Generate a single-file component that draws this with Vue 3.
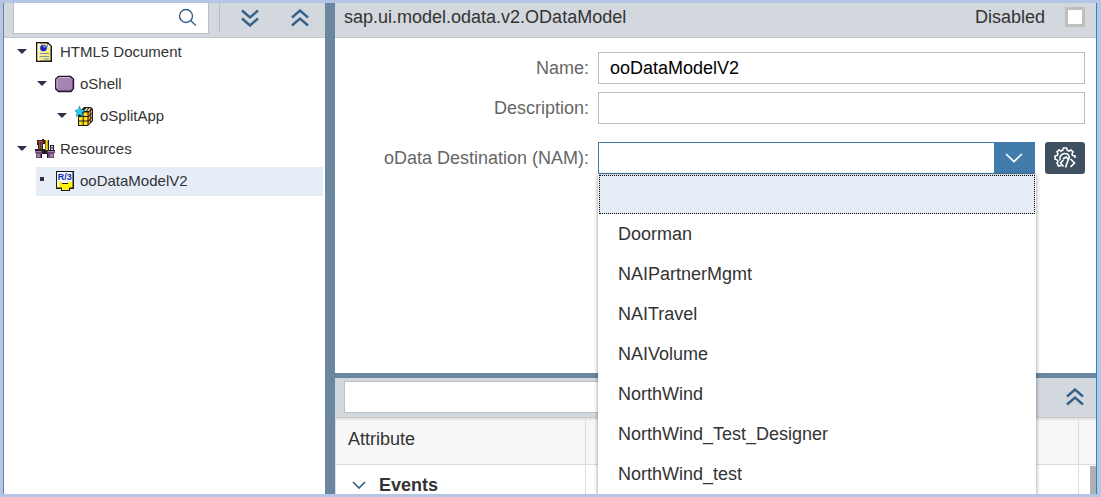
<script setup>
import { ref } from 'vue'

const name = ref('ooDataModelV2')
const description = ref('')
const destination = ref('')
const disabled = ref(false)
const treeFilter = ref('')
const attributeFilter = ref('')
const open = ref(true)

const tree = [
  { label: 'HTML5 Document', level: 0, icon: 'document' },
  { label: 'oShell', level: 1, icon: 'shell' },
  { label: 'oSplitApp', level: 2, icon: 'cube' },
  { label: 'Resources', level: 0, icon: 'resources', group: true },
  { label: 'ooDataModelV2', level: 1, icon: 'model', selected: true, leaf: true },
]

const destinations = [
  '',
  'Doorman',
  'NAIPartnerMgmt',
  'NAITravel',
  'NAIVolume',
  'NorthWind',
  'NorthWind_Test_Designer',
  'NorthWind_test',
]

function choose(value) {
  destination.value = value
  open.value = false
}
</script>

<template>
  <div class="frame">
    <div class="window">
      <aside class="side">
        <div class="side-bar">
          <div class="search">
            <input v-model="treeFilter" type="text" aria-label="Filter tree" />
            <svg class="lens" viewBox="0 0 20 20" aria-hidden="true">
              <circle cx="8" cy="8" r="6.5" />
              <path d="M12.7 12.7 18 17.5" />
            </svg>
          </div>
          <span class="divider"></span>
          <button class="plain" aria-label="Expand all">
            <svg class="double" viewBox="0 0 18 18"><path d="M1 1.5 9 8.5 17 1.5M1 9.5 9 16.5 17 9.5" /></svg>
          </button>
          <button class="plain" aria-label="Collapse all">
            <svg class="double" viewBox="0 0 18 18"><path d="M1 8.5 9 1.5 17 8.5M1 16.5 9 9.5 17 16.5" /></svg>
          </button>
        </div>

        <ul class="tree" role="tree">
          <li
            v-for="node in tree"
            :key="node.label"
            role="treeitem"
            :aria-selected="!!node.selected"
            :class="['node', 'level-' + node.level, { selected: node.selected, group: node.group }]"
          >
            <span :class="node.leaf ? 'bullet' : 'arrow'"></span>
            <svg v-if="node.icon === 'document'" class="icon" viewBox="0 0 20 20">
              <path fill="#1a1a1a" d="M1 0h12l4 4v16H1z" />
              <path fill="#fbe98c" d="M2.500 1.500H12V5h3.500v13.500h-13z" />
              <path fill="#fff6c4" d="M2.500 1.500H5v17H2.500z" />
              <path fill="#fff" d="M12.500 1.500V5H16z" />
              <circle cx="8.500" cy="6" r="3.300" fill="#1524c4" />
              <path fill="#5b92f2" d="M7.500 3.500 10 3l1 2-2 1z" />
              <path stroke="#7795a6" stroke-width="1.200" d="M4.500 11.500h9.500M4.500 14.500h9.500M9 17h5" />
            </svg>
            <svg v-else-if="node.icon === 'shell'" class="icon" viewBox="0 0 20 20">
              <path fill="#a684b4" stroke="#211326" stroke-width="1.300" d="M3.500 2.500h12L18.500 5v9.500L16 17.500H3.500L.7 15V5z" />
              <path fill="none" stroke="#cdb2d6" d="M2 14V5.500l2-2h11" />
              <path fill="none" stroke="#765180" d="M4 16.300h11.500l2-2V6" />
            </svg>
            <svg v-else-if="node.icon === 'cube'" class="icon" viewBox="0 0 20 20">
              <path fill="#1a1a1a" d="m3 7 6-6h7l2 2v12l-5 5H3z" />
              <path fill="#fff4b0" d="m8.500 5 3-3H13l-2 3zM12 5l2.500-3H16l-2 3z" />
              <path fill="#f4a64f" d="m13.500 7 1.500-2v3l-1.500 2zM15.700 5 17 3.500v3L15.700 8zM13.500 11.500l1.500-2v3l-1.500 2zM15.700 9 17 7.500v3l-1.300 1.500zM13.500 16l1.500-2v3l-1.500 1.500zM15.700 13l1.300-1.500v3L15.700 16z" />
              <path fill="#ffe119" d="M8.500 6.500h4V10h-4zM4 11h3.700v3.600H4zM8.700 11h3.800v3.600H8.700zM4 15.500h3.700V19H4zM8.700 15.500h3.800V19H8.700z" />
              <path fill="#28cbea" stroke="#07708a" stroke-width=".5" d="m4.500 0 1.300 3.500L10 4.500 7 6.500l1 4L4.500 8.500 1 10.500l1-4-2.500-2 3.700-.8z" />
            </svg>
            <svg v-else-if="node.icon === 'resources'" class="icon" viewBox="0 0 20 20">
              <path fill="#222" d="M2 1h5V0h2v1h1v4H8v5h2V1h4v10h1V6h4v5h1v2H0v-3h3V6H2z" />
              <path fill="#d33" d="M3 2h5v1.500H3zM4 4h1.500v6H4z" />
              <path fill="#506b76" d="M6 4h1v6H6z" />
              <path fill="#f3d021" d="M10.500 1h2.500v10h-2.500z" />
              <path stroke="#6e5816" stroke-width=".7" d="M12 3h1M12 5h1M12 7h1M12 9h1" />
              <path fill="#d5d5df" d="M16 7h2v1l-1 1 1 1v1h-2v-1l1-1-1-1z" />
              <path fill="#704677" d="M0 12h20v2h-1v5h-6v-4H7v4H1v-5H0z" />
              <path fill="#a47ba9" d="M1 12h5v1H1zM13 12h6v1h-6zM2 15h3v3H2zM15 15h3v3h-3z" />
              <path fill="#221326" d="M7 12h5v3H7zM12 14h1v5h-1zM6 15h1v4H6z" />
            </svg>
            <svg v-else class="icon" viewBox="0 0 20 20">
              <path fill="#1a1a1a" d="M1 0h18v18h-4v2H6v-2H1z" />
              <path fill="#edf4ff" d="M2 1h15.500v10H2z" />
              <path fill="#ffef12" d="M2 11h5v2h6v-2h4.500v5.500H14V19H7v-2.500H2z" />
              <path fill="#fffde0" d="M2 11h2v5H2zM7 11h6v1H7z" />
              <text x="9.700" y="9" text-anchor="middle" class="mark">R/3</text>
            </svg>
            <span>{{ node.label }}</span>
          </li>
        </ul>
      </aside>

      <div class="splitter"></div>

      <main class="main">
        <header class="title-bar">
          <span>sap.ui.model.odata.v2.ODataModel</span>
          <label class="disabled">Disabled<input v-model="disabled" type="checkbox" /></label>
        </header>

        <form class="form" @submit.prevent>
          <label for="name">Name:</label>
          <input id="name" v-model="name" class="field" type="text" />
          <label for="description">Description:</label>
          <input id="description" v-model="description" class="field" type="text" />
          <label class="spaced" for="destination">oData Destination (NAM):</label>
          <div class="destination spaced">
            <div class="combo">
              <input
                id="destination"
                v-model="destination"
                type="text"
                role="combobox"
                aria-controls="destinations"
                :aria-expanded="open"
              />
              <button type="button" class="toggle" aria-label="Show destinations" @click="open = !open">
                <svg viewBox="0 0 18 10"><path d="M1 1 9 8.500 17 1" /></svg>
              </button>
              <ul v-if="open" id="destinations" class="menu" role="listbox">
                <li
                  v-for="item in destinations"
                  :key="item"
                  role="option"
                  :aria-selected="item === destination"
                  :class="{ active: item === destination }"
                  @click="choose(item)"
                >{{ item }}</li>
              </ul>
            </div>
            <button type="button" class="config" aria-label="Configure destination">
              <svg viewBox="0 0 22 22">
                <path d="M7.500 18.500 4.500 19 3 16l1-1.500-.7-1.500L1 12V9l2.300-.7.700-1.500-1-2L5 3l2 1 1.700-.8L9.500 1h3l.8 2.200L15 4l2-1 2 2-1 2 .7 1.500L21 9v2" />
                <path d="M6 13.500C5 9 8 6.500 11 6.500c3.500 0 5 3 4 5.500M9.500 13 6.500 16l3 3.500M9 12l3-2 2 2M11.500 20.500l3.500-10M16.500 12l4 4-4 4" />
              </svg>
            </button>
          </div>
        </form>

        <section class="attributes">
          <div class="attribute-bar">
            <input v-model="attributeFilter" type="text" aria-label="Filter attributes" />
            <button class="plain" aria-label="Collapse attributes">
              <svg class="double" viewBox="0 0 18 18"><path d="M1 8.5 9 1.5 17 8.5M1 16.5 9 9.5 17 16.5" /></svg>
            </button>
          </div>
          <div class="table-area">
            <table>
              <thead>
                <tr><th class="first">Attribute</th><th></th><th class="last"></th></tr>
              </thead>
              <tbody>
                <tr>
                  <td>
                    <div class="events">
                      <svg viewBox="0 0 14 8"><path d="M1 1 7 7 13 1" /></svg>
                      Events
                    </div>
                  </td>
                  <td></td>
                  <td></td>
                </tr>
              </tbody>
            </table>
            <span class="scroll-thumb"></span>
          </div>
        </section>
      </main>
    </div>
  </div>
</template>

<style>
body {
  margin: 0;
}
</style>

<style scoped>
.frame,
.frame * {
  box-sizing: border-box;
}
.frame {
  height: 100vh;
  padding: 3px 4px 3px 3px;
  background: #b5c5e5;
  color: #333;
  font: 18px "Liberation Sans", Arial, sans-serif;
}
.window {
  display: flex;
  height: 100%;
  overflow: hidden;
  border-left: 1px solid #6a879f;
  border-right: 1px solid #1b87d8;
  background: #fff;
}
input,
button {
  margin: 0;
  border-radius: 0;
  font: inherit;
}
button {
  padding: 0;
  border: 0;
  cursor: pointer;
}
input {
  min-width: 0;
  outline: none;
}
svg {
  display: block;
}
.side {
  display: flex;
  flex-direction: column;
  flex: 0 0 321px;
}
.side-bar {
  display: flex;
  align-items: flex-start;
  height: 35px;
  padding-left: 9px;
  border-bottom: 1px solid #c4c6ca;
  background: #d3d7de;
}
.search {
  display: flex;
  flex: 1;
  align-items: center;
  height: 31px;
  padding-right: 10px;
  border: 1px solid #bfbfbf;
  border-top: 0;
  background: #fff;
}
.search input {
  flex: 1;
  width: 0;
  border: 0;
  background: transparent;
}
.lens {
  width: 20px;
  height: 20px;
  fill: none;
  stroke: #346187;
  stroke-width: 1.4;
}
.divider {
  width: 1px;
  height: 29px;
  margin: 0 5px 0 10px;
  background: #b9bec6;
}
.plain {
  display: grid;
  place-items: center;
  width: 50px;
  height: 29px;
  background: transparent;
}
.double {
  width: 18px;
  height: 18px;
  fill: none;
  stroke: #346187;
  stroke-width: 2.4;
}
.tree {
  display: flex;
  flex-direction: column;
  gap: 3px;
  margin: 0;
  padding: 0 2px 0 12px;
  list-style: none;
  font-size: 15px;
}
.node {
  display: flex;
  align-items: center;
  height: 29px;
  padding-bottom: 2px;
}
.level-1 {
  margin-left: 20px;
}
.level-2 {
  margin-left: 40px;
}
.group {
  margin-top: 1px;
}
.selected {
  background: #e6edf6;
}
.arrow {
  width: 10px;
  margin: 0 8px 1px 1px;
  border: 5px solid transparent;
  border-top-color: #30304a;
  border-bottom: 0;
}
.bullet {
  width: 4px;
  height: 4px;
  margin: 0 11px 3px 4px;
  background: #30304a;
}
.icon {
  width: 20px;
  height: 20px;
  margin-right: 5px;
}
.mark {
  fill: #1732b0;
  font: bold 9px "Liberation Sans", Arial, sans-serif;
}
.splitter {
  flex: 0 0 10px;
  background: #6a879f;
}
.main {
  display: flex;
  flex: 1;
  flex-direction: column;
  min-width: 0;
}
.title-bar {
  display: flex;
  align-items: center;
  justify-content: space-between;
  height: 35px;
  padding: 0 11px 6px 9px;
  border-bottom: 1px solid #c4c6ca;
  background: #d3d7de;
}
.disabled {
  display: flex;
  align-items: center;
  gap: 20px;
}
.disabled input {
  appearance: none;
  width: 20px;
  height: 20px;
  border: 3px solid #bfbfbf;
  background: #fff;
}
.disabled input:checked {
  background: #427cac;
}
.form {
  display: grid;
  flex: 1;
  grid-template-columns: 254px 1fr;
  align-content: start;
  gap: 8px 9px;
  padding: 14px 11px 0 0;
}
.form > label {
  color: #666;
  line-height: 32px;
  text-align: right;
}
.form > .spaced {
  margin-top: 10px;
}
.field {
  height: 32px;
  padding: 0 11px;
  border: 1px solid #bfbfbf;
  color: #000;
}
.destination {
  display: flex;
  gap: 10px;
}
.combo {
  position: relative;
  display: flex;
  flex: 1;
  height: 32px;
  border: 1px solid #427cac;
}
.combo input {
  flex: 1;
  padding: 0 11px;
  border: 0;
}
.toggle {
  display: grid;
  place-items: center;
  width: 40px;
  background: #427cac;
}
.toggle svg {
  width: 18px;
  height: 10px;
  fill: none;
  stroke: #fff;
  stroke-width: 1.7;
}
.config {
  display: grid;
  place-items: center;
  width: 40px;
  height: 32px;
  border-radius: 3px;
  background: #3f5161;
}
.config svg {
  width: 22px;
  height: 22px;
  fill: none;
  stroke: #fff;
  stroke-width: 1.6;
}
.menu {
  position: absolute;
  z-index: 2;
  top: 32px;
  right: -2px;
  left: -1px;
  margin: 0;
  padding: 0 0 8px;
  background: #fff;
  box-shadow: 0 0 4px rgba(0, 0, 0, 0.45);
  list-style: none;
}
.menu li {
  height: 40px;
  padding: 0 20px;
  line-height: 40px;
}
.menu li.active {
  height: 39px;
  margin: 0 1px;
  border: 1px dotted #000;
  background: #e6edf6;
}
.attributes {
  flex: none;
  border-top: 5px solid #6a879f;
}
.attribute-bar {
  display: flex;
  align-items: center;
  justify-content: space-between;
  height: 40px;
  padding: 0 0 1px 9px;
  border-bottom: 1px solid #c8c8c8;
  background: #d3d7de;
}
.attribute-bar input {
  width: 50%;
  height: 32px;
  border: 1px solid #bfbfbf;
}
.attribute-bar .plain {
  width: 42px;
}
.table-area {
  position: relative;
  border-top: 2px solid #e5e5e5;
}
table {
  width: 100%;
  border-collapse: separate;
  border-spacing: 0;
  border-left: 1px solid #ddd;
  table-layout: fixed;
}
th {
  height: 45px;
  padding: 0 0 6px 12px;
  border-right: 1px solid #ddd;
  border-bottom: 1px solid #ddd;
  background: #f7f7f7;
  font-weight: normal;
  text-align: left;
}
.first {
  width: 250px;
}
.last {
  width: 17px;
}
td {
  height: 29px;
  padding: 0;
  border-right: 1px solid #ddd;
}
th:last-child,
td:last-child {
  border-right: 0;
}
.events {
  display: flex;
  align-items: center;
  gap: 13px;
  height: 29px;
  padding: 11px 0 0 16px;
  font-weight: bold;
}
.events svg {
  width: 14px;
  height: 8px;
  fill: none;
  stroke: #346187;
  stroke-width: 1.7;
}
.scroll-thumb {
  position: absolute;
  right: 0;
  bottom: 0;
  width: 6px;
  height: 28px;
  background: #b0b0b0;
}
</style>
